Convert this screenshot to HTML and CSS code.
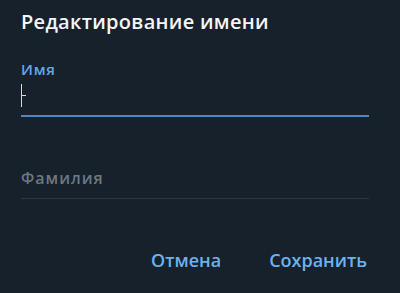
FILE: index.html
```html
<!DOCTYPE html>
<html lang="ru">
<head>
    <meta charset="UTF-8">
    <title>Редактирование имени</title>
    <link rel="stylesheet" href="styles.css">
</head>
<body>
    <div class="dialog">
        <h1 class="title">Редактирование имени</h1>

        <div class="field active">
            <label class="field-label">Имя</label>
            <div class="field-input"><span class="caret"></span></div>
        </div>

        <div class="field">
            <div class="placeholder">Фамилия</div>
        </div>

        <div class="actions">
            <button class="btn">Отмена</button>
            <button class="btn">Сохранить</button>
        </div>
    </div>
</body>
</html>
```

FILE: styles.css
```css
body {
    margin: 0;
    background-color: #17212b;
    font-family: "Open Sans", "Noto Sans", sans-serif;
}

.dialog {
    width: 400px;
    height: 293px;
    padding: 8px 31px 0 21px;
    box-sizing: border-box;
}

.title {
    margin: 0;
    color: #f5f5f5;
    font-size: 20px;
    font-weight: 600;
    line-height: 28px;
    letter-spacing: 0.3px;
}

.field {
    border-bottom: 1px solid #2b3743;
}

.field.active {
    margin-top: 23px;
    border-bottom: 2px solid #5288c1;
}

.field-label {
    display: block;
    color: #64a9e8;
    font-size: 15px;
    font-weight: 600;
    line-height: 20px;
    letter-spacing: 0.8px;
}

.field-input {
    height: 36px;
    padding-top: 5px;
    box-sizing: border-box;
}

.caret {
    display: block;
    width: 1px;
    height: 23px;
    background-color: #d8d8d8;
    position: relative;
}

.caret:after {
    content: '';
    position: absolute;
    left: 1px;
    top: 11px;
    width: 4px;
    height: 1px;
    background-color: #e6d7a8;
}

.placeholder {
    margin-top: 49px;
    padding-bottom: 8px;
    color: #6b7886;
    font-size: 16px;
    font-weight: 600;
    line-height: 24px;
    letter-spacing: 1px;
}

.actions {
    display: flex;
    justify-content: flex-end;
    gap: 48px;
    margin-top: 49px;
    padding-right: 2px;
}

.btn {
    background: none;
    border: none;
    padding: 0;
    color: #6cb2ef;
    font-family: inherit;
    font-size: 18px;
    font-weight: 600;
    line-height: 24px;
    cursor: pointer;
}
```
